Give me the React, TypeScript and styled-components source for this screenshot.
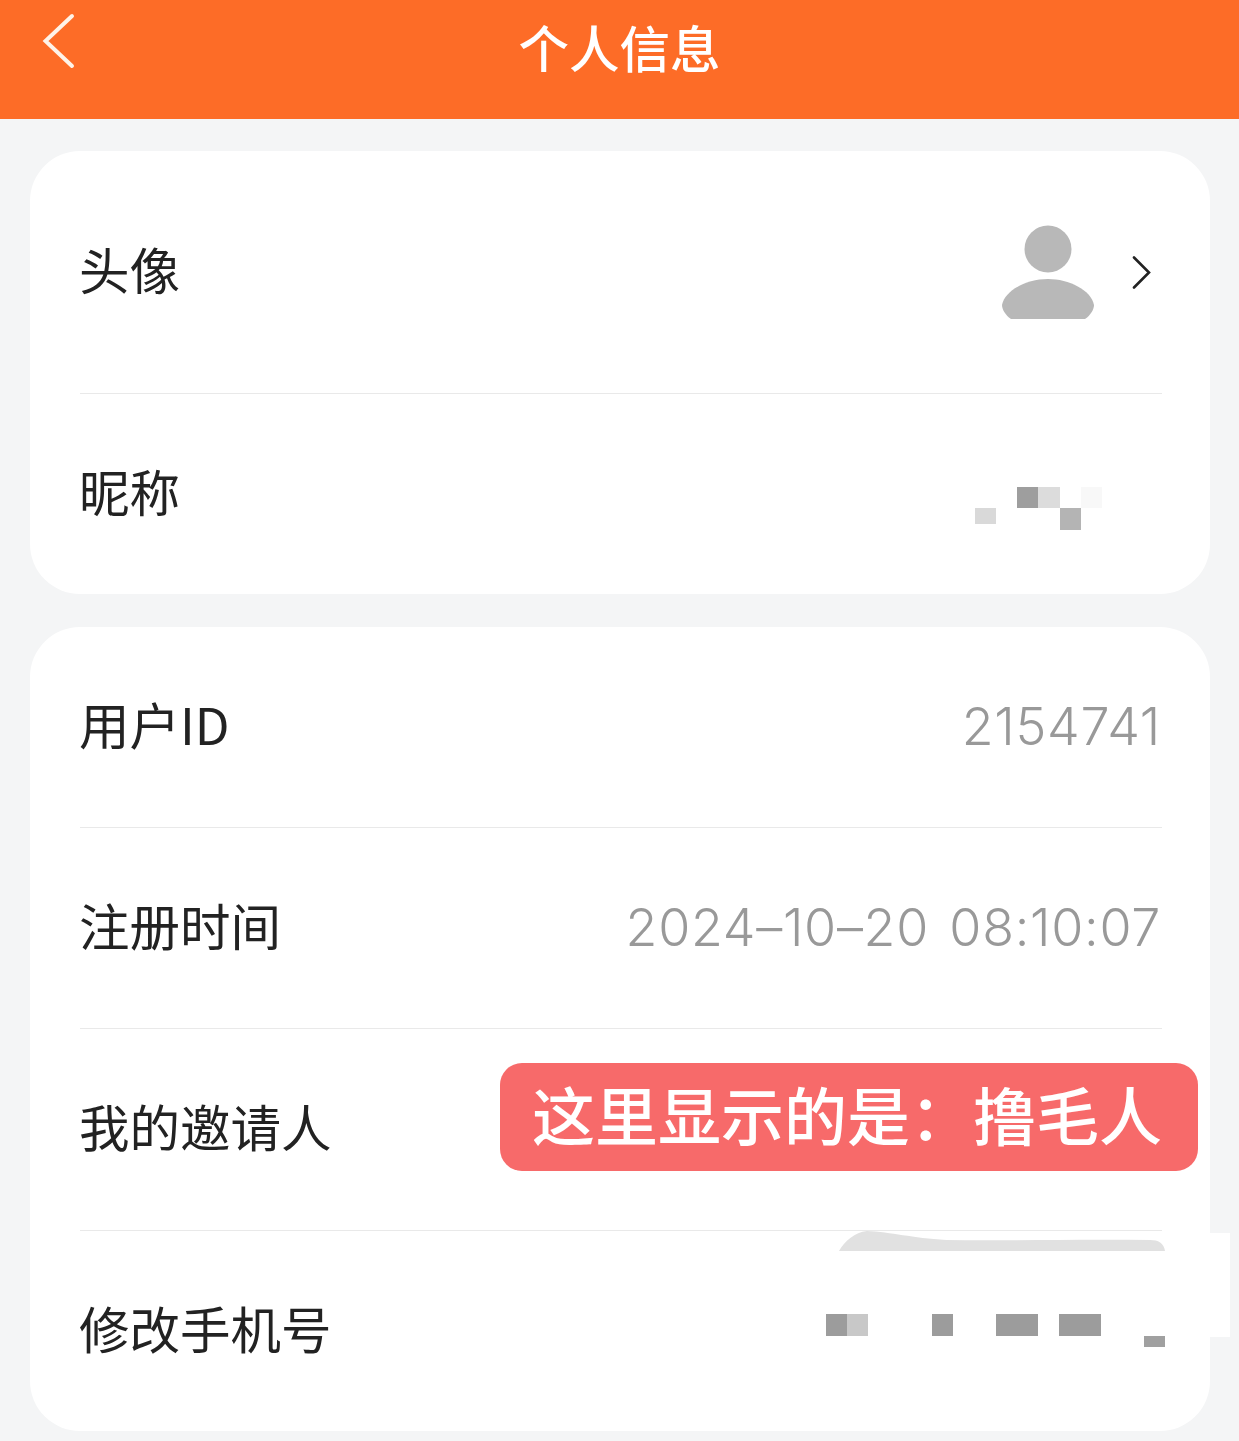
import styled, { createGlobalStyle } from "styled-components";

const GlobalStyle = createGlobalStyle`
  html, body {
    margin: 0;
    padding: 0;
    background: #f4f5f6;
  }
  body {
    font-family: "Noto Sans CJK SC", "Liberation Sans", sans-serif;
  }
`;

const Page = styled.div`
  width: 1239px;
  height: 1441px;
  overflow: hidden;
`;

const Header = styled.header`
  position: relative;
  height: 119px;
  box-sizing: border-box;
  padding-bottom: 28px;
  background: #fd6c27;
  display: flex;
  align-items: center;
  justify-content: center;
  margin-bottom: 32px;
`;

const Title = styled.h1`
  margin: 0;
  color: #fff;
  font-size: 50.5px;
  font-weight: 500;
  line-height: 60px;
`;

const BackIcon = styled.svg`
  position: absolute;
  left: 40px;
  top: 10px;
`;

const Card = styled.section`
  position: relative;
  margin: 0 29px 33px 30px;
  padding: 0 48px 0 50px;
  background: #fff;
  border-radius: 50px;
`;

const Row = styled.div<{ $height: number }>`
  position: relative;
  height: ${({ $height }) => $height}px;
  display: flex;
  align-items: center;
  justify-content: space-between;
  & + & {
    border-top: 1px solid #e9e9e9;
  }
`;

const Label = styled.span`
  color: #222;
  font-size: 50.5px;
  line-height: 60px;
  padding-bottom: 9px;
  margin-left: -1px;
`;

const Value = styled.span`
  color: #999;
  font-family: "Inter", "Liberation Sans", sans-serif;
  font-size: 52px;
  font-weight: 350;
  line-height: 60px;
  letter-spacing: 0.7px;
  word-spacing: 5px;
  margin-right: 1px;
`;

const AvatarGroup = styled.div`
  display: flex;
  align-items: center;
  gap: 37px;
  margin-right: 11px;
`;

const Mosaic = styled.div<{ $columns: number; $right: number; $top: number }>`
  display: grid;
  grid-template-columns: repeat(${({ $columns }) => $columns}, 21.2px);
  grid-auto-rows: 21.5px;
  margin-right: ${({ $right }) => $right}px;
  margin-top: ${({ $top }) => $top}px;
`;

const Pixel = styled.i<{ $col: number; $row: number; $tone: string; $h?: number }>`
  grid-column: ${({ $col }) => $col};
  grid-row: ${({ $row }) => $row};
  height: ${({ $h }) => ($h ? `${$h}px` : "auto")};
  background: ${({ $tone }) => $tone};
`;

const Callout = styled.div`
  position: absolute;
  left: 470px;
  top: 436px;
  width: 698px;
  height: 108px;
  box-sizing: border-box;
  padding: 0 0 9px 32px;
  display: flex;
  align-items: center;
  background: #f76a6a;
  border-radius: 22px;
  color: #fff;
  font-size: 63px;
  font-weight: 500;
  white-space: nowrap;
`;

const Smear = styled.svg`
  position: absolute;
  right: -3px;
  top: 0;
`;

const WhitePatch = styled.div`
  position: absolute;
  right: -20px;
  top: 606px;
  width: 20px;
  height: 104px;
  background: #fff;
`;

type Cell = { col: number; row: number; tone: string; h?: number };

const nickname: Cell[] = [
  { col: 1, row: 2, tone: "#d9d9d9", h: 16 },
  { col: 3, row: 1, tone: "#9e9e9e" },
  { col: 4, row: 1, tone: "#dcdcdc" },
  { col: 5, row: 2, tone: "#b4b4b4" },
  { col: 6, row: 1, tone: "#f8f8f8" },
];

const phone: Cell[] = [
  { col: 1, row: 1, tone: "#9c9c9c" },
  { col: 2, row: 1, tone: "#c8c8c8" },
  { col: 6, row: 1, tone: "#9c9c9c" },
  { col: 9, row: 1, tone: "#9c9c9c" },
  { col: 10, row: 1, tone: "#9c9c9c" },
  { col: 12, row: 1, tone: "#9c9c9c" },
  { col: 13, row: 1, tone: "#9c9c9c" },
  { col: 16, row: 2, tone: "#a0a0a0", h: 11 },
];

const App = () => {
  return (
    <Page>
      <GlobalStyle />
      <Header>
        <BackIcon width="40" height="62" viewBox="0 0 40 62" fill="none">
          <path
            d="M32 6L5.5 31L32 56"
            stroke="#fff3e8"
            strokeWidth="4"
            strokeLinecap="round"
            strokeLinejoin="miter"
          />
        </BackIcon>
        <Title>个人信息</Title>
      </Header>
      <Card>
        <Row $height={242}>
          <Label>头像</Label>
          <AvatarGroup>
            <svg width="94" height="94" viewBox="0 0 94 94">
              <circle cx="47" cy="24" r="23.5" fill="#b8b8b8" />
              <path
                d="M10 94C4 90 1 84 1 80C4 65 26 54 47 54C68 54 90 65 93 80C93 84 90 90 84 94Z"
                fill="#b8b8b8"
              />
            </svg>
            <svg width="19" height="33" viewBox="0 0 19 33" fill="none">
              <path
                d="M2 1.5L17 16.5L2 31.5"
                stroke="#222"
                strokeWidth="2.6"
                strokeLinecap="round"
              />
            </svg>
          </AvatarGroup>
        </Row>
        <Row $height={200}>
          <Label>昵称</Label>
          <Mosaic $columns={6} $right={60} $top={28}>
            {nickname.map((p) => (
              <Pixel key={`${p.col}-${p.row}`} $col={p.col} $row={p.row} $tone={p.tone} $h={p.h} />
            ))}
          </Mosaic>
        </Row>
      </Card>
      <Card>
        <Row $height={200}>
          <Label>用户ID</Label>
          <Value>2154741</Value>
        </Row>
        <Row $height={200}>
          <Label>注册时间</Label>
          <Value>2024–10–20 08:10:07</Value>
        </Row>
        <Row $height={201}>
          <Label>我的邀请人</Label>
        </Row>
        <Row $height={200}>
          <Label>修改手机号</Label>
          <Smear width="328" height="20" viewBox="0 0 330 20" preserveAspectRatio="none">
            <path
              d="M2 20C8 10 18 1 30 0C55 1 75 7 110 9C170 10 240 8 315 9C323 9 329 12 330 20Z"
              fill="#e1e1e1"
            />
          </Smear>
          <Mosaic $columns={16} $right={-3} $top={9}>
            {phone.map((p) => (
              <Pixel key={`${p.col}-${p.row}`} $col={p.col} $row={p.row} $tone={p.tone} $h={p.h} />
            ))}
          </Mosaic>
        </Row>
        <Callout>{"这里显示的是\uFF1A撸毛人"}</Callout>
        <WhitePatch />
      </Card>
    </Page>
  );
};

export default App;
